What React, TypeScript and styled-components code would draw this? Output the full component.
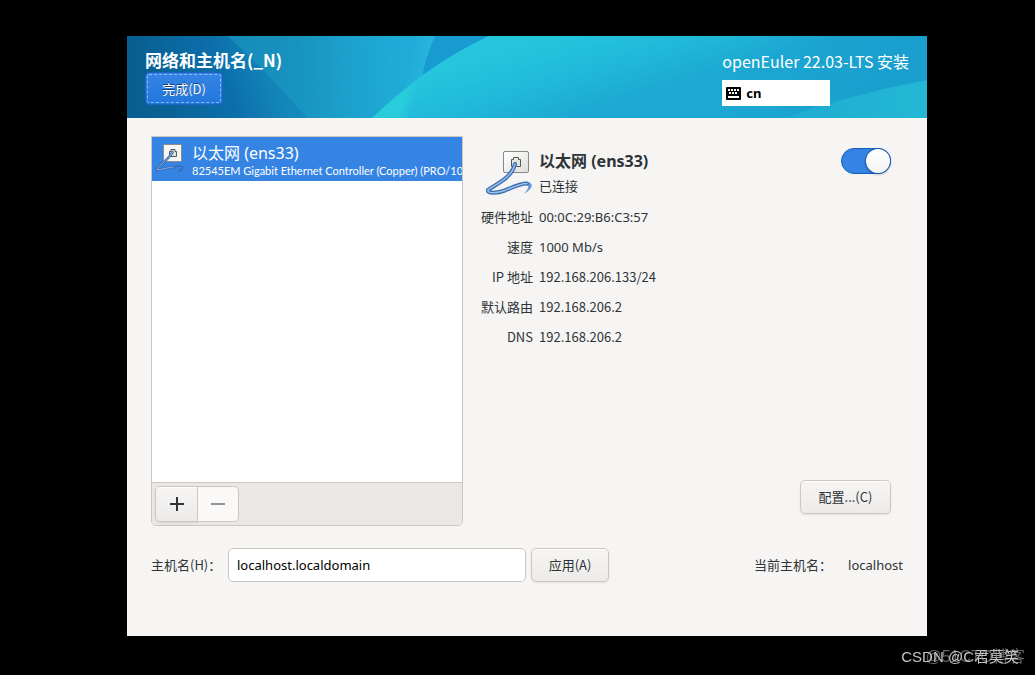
import React, { useState } from "react";
import styled, { createGlobalStyle, css } from "styled-components";

const latin = `"Noto Sans", "Noto Sans CJK SC", sans-serif`;
const cjk = `"Noto Sans CJK SC", sans-serif`;

const GlobalStyle = createGlobalStyle`
  * { box-sizing: border-box; }
  body {
    margin: 0;
    background: #000;
    color: #2e3436;
    font: 13px/20px ${cjk};
  }
  button, input { font: inherit; color: inherit; margin: 0; }
  h1, h2, p, dl, dd, dt, ul { margin: 0; padding: 0; }
`;

const Screen = styled.div`
  display: flex;
  min-height: 100vh;
  padding: 36px 108px 39px 127px;
`;

const Installer = styled.main`
  flex: 1;
  min-width: 0;
  background: #f6f5f4;
`;

const Header = styled.header`
  position: relative;
  display: flex;
  justify-content: space-between;
  height: 82px;
  padding: 12px 18px 0;
  overflow: hidden;
  background: #1fb0d8;
  color: #fff;
`;

const Backdrop = styled.svg`
  position: absolute;
  inset: 0;
  width: 100%;
  height: 100%;
`;

const HeaderSide = styled.div`
  position: relative;
  display: flex;
  flex-direction: column;
  align-items: flex-start;
`;

const Title = styled.h1`
  font-size: 17px;
  line-height: 24px;
  font-weight: 700;
`;

const DoneButton = styled.button`
  min-width: 78px;
  height: 33px;
  padding: 0 16px;
  border: 1px solid #1b63c4;
  border-radius: 4px;
  outline: 1px dashed rgba(255, 255, 255, 0.45);
  outline-offset: -3px;
  background: linear-gradient(#3584e4, #2277dd);
  color: #fff;
  text-shadow: 0 -1px rgba(0, 0, 0, 0.5);
`;

const Product = styled.p`
  font: 16px/26px ${cjk};
`;

const Layout = styled.button`
  display: flex;
  align-items: center;
  gap: 5px;
  width: 108px;
  height: 26px;
  margin-top: 6px;
  padding: 0 4px;
  border: 0;
  background: #fff;
  color: #000;
  font: 700 13px/20px ${latin};
`;

const Body = styled.div`
  padding: 18px 24px;
`;

const Panels = styled.div`
  display: grid;
  grid-template-columns: 312px 1fr;
  gap: 18px;
  height: 390px;
`;

const DevicePanel = styled.section`
  display: flex;
  flex-direction: column;
  min-width: 0;
  border: 1px solid #cdc7c2;
  border-radius: 0 0 5px 5px;
  background: #fff;
  overflow: hidden;
`;

const DeviceList = styled.ul`
  flex: 1;
  list-style: none;
`;

const Device = styled.li`
  display: flex;
  gap: 5px;
  height: 44px;
  padding: 3px 0 0 3px;
  background: #3584e4;
  color: #fff;
  white-space: nowrap;
  overflow: hidden;

  svg { flex: none; }
`;

const DeviceName = styled.p`
  font: 16px/26px ${latin};
`;

const DeviceModel = styled.p`
  font: 11px/10px Lato, ${cjk};
`;

const Toolbar = styled.div`
  display: flex;
  height: 43px;
  padding: 3px;
  border-top: 1px solid #cdc7c2;
  background: #ebe7e4;
`;

const raised = css`
  border: 1px solid #cdc7c2;
  background: linear-gradient(#f6f5f4, #edebe9);
  box-shadow: inset 0 1px #fff, 0 1px 2px rgba(0, 0, 0, 0.09);
`;

const ToolButton = styled.button<{ $side: "left" | "right" }>`
  display: grid;
  place-items: center;
  width: ${(p) => (p.$side === "left" ? 43 : 41)}px;
  height: 36px;
  padding: 0;
  ${raised}
  border-radius: ${(p) => (p.$side === "left" ? "5px 0 0 5px" : "0 5px 5px 0")};
  ${(p) => p.$side === "right" && css`border-left: 0;`}

  &:disabled {
    background: #faf9f8;
    color: #929595;
    box-shadow: none;
  }
`;

const PushButton = styled.button<{ $width: number }>`
  min-width: ${(p) => p.$width}px;
  height: 34px;
  padding: 0 16px;
  ${raised}
  border-radius: 5px;
`;

const DetailPanel = styled.section`
  display: flex;
  flex-direction: column;
  padding: 12px 12px 12px 0;
`;

const Connection = styled.div`
  display: flex;
  gap: 7px;
  height: 54px;
  padding-left: 3px;
`;

const ConnectionText = styled.div`
  flex: 1;
  line-height: 24px;
`;

const ConnectionName = styled.h2`
  font: 700 16px/26px ${latin};
`;

const Switch = styled.input`
  appearance: none;
  width: 50px;
  height: 26px;
  margin: 0;
  padding: 0;
  border: 1px solid #185fb4;
  border-radius: 13px;
  background: #deddda;

  &::before {
    content: "";
    display: block;
    width: 24px;
    height: 24px;
    border-radius: 50%;
    background: linear-gradient(#fff, #f4f3f2);
    box-shadow: 0 0 0 1px #185fb4, 0 1px 2px 1px rgba(0, 0, 0, 0.2);
  }
  &:checked { background: #3584e4; }
  &:checked::before { margin-left: 24px; }
`;

const Facts = styled.dl`
  flex: 1;
  display: grid;
  grid-template-columns: 52px 1fr;
  grid-auto-rows: 30px;
  align-items: center;
  column-gap: 6px;
`;

const FactLabel = styled.dt`
  text-align: right;
  white-space: nowrap;
`;

const FactValue = styled.dd<{ $latin?: boolean }>`
  font-family: ${(p) => (p.$latin ? latin : cjk)};
`;

const Configure = styled(PushButton)`
  align-self: flex-end;
`;

const HostRow = styled.form`
  display: flex;
  align-items: center;
  height: 34px;
  margin-top: 22px;
`;

const HostLabel = styled.label`
  width: 77px;
  white-space: nowrap;
`;

const HostInput = styled.input`
  width: 298px;
  height: 34px;
  margin-right: 5px;
  padding: 0 8px;
  border: 1px solid #cdc7c2;
  border-radius: 5px;
  background: #fff;
  color: #000;
  font-family: ${latin};
`;

const CurrentHost = styled.p`
  display: flex;
  gap: 16px;
  margin-left: auto;
  white-space: nowrap;
`;

const HostName = styled.span`
  font-family: ${latin};
`;

const Watermark = styled.div<{ $right: number; $size: number; $color: string }>`
  position: fixed;
  right: ${(p) => p.$right}px;
  bottom: 6px;
  color: ${(p) => p.$color};
  font: ${(p) => p.$size}px/24px "Liberation Sans", ${cjk};
  white-space: nowrap;
`;

function HeaderBackdrop() {
  return (
    <Backdrop viewBox="0 0 800 82" preserveAspectRatio="none" aria-hidden="true">
      <defs>
        <linearGradient id="base" x1="0" x2="780" y1="20" y2="-60" gradientUnits="userSpaceOnUse">
          <stop offset="0" stopColor="#085e91" />
          <stop offset="0.1" stopColor="#0b6799" />
          <stop offset="0.19" stopColor="#1483b0" />
          <stop offset="0.27" stopColor="#1b9fca" />
          <stop offset="0.34" stopColor="#1fabd8" />
          <stop offset="0.4" stopColor="#1fadd9" />
        </linearGradient>
        <linearGradient id="band" x1="40" x2="145" y1="80" y2="40" gradientUnits="userSpaceOnUse">
          <stop offset="0" stopColor="#0b6ba9" stopOpacity="0" />
          <stop offset="0.6" stopColor="#0b6fae" stopOpacity="0.85" />
          <stop offset="1" stopColor="#1288be" stopOpacity="0.65" />
        </linearGradient>
        <linearGradient id="glow" x1="140" x2="225" y1="50" y2="10" gradientUnits="userSpaceOnUse">
          <stop offset="0" stopColor="#1b9bc9" stopOpacity="0.6" />
          <stop offset="1" stopColor="#1fadd8" stopOpacity="0" />
        </linearGradient>
        <linearGradient id="arc" x1="420" x2="445" y1="0" y2="82" gradientUnits="userSpaceOnUse">
          <stop offset="0" stopColor="#26c5dd" />
          <stop offset="0.5" stopColor="#21b9db" />
          <stop offset="1" stopColor="#1ca8d2" />
        </linearGradient>
        <linearGradient id="right" x1="620" x2="770" y1="0" y2="60" gradientUnits="userSpaceOnUse">
          <stop offset="0" stopColor="#189ccd" stopOpacity="0" />
          <stop offset="1" stopColor="#189ccd" stopOpacity="0.8" />
        </linearGradient>
        <linearGradient id="corner" x1="0" x2="1" y1="0" y2="0">
          <stop offset="0" stopColor="#1fabd1" />
          <stop offset="1" stopColor="#23b8d5" />
        </linearGradient>
        <linearGradient id="ray" x1="255" x2="287" y1="60" y2="68" gradientUnits="userSpaceOnUse">
          <stop offset="0" stopColor="#2bd6da" stopOpacity="0.55" />
          <stop offset="0.6" stopColor="#2bd6da" stopOpacity="0.65" />
          <stop offset="1" stopColor="#2bd6da" stopOpacity="0" />
        </linearGradient>
        <linearGradient id="streak" x1="284" x2="304" y1="16" y2="20" gradientUnits="userSpaceOnUse">
          <stop offset="0" stopColor="#34bce0" stopOpacity="0" />
          <stop offset="1" stopColor="#34bce0" stopOpacity="0.5" />
        </linearGradient>
      </defs>
      <rect width="800" height="82" fill="url(#base)" />
      <path d="M20 0H100C128 24 158 56 180 82H20Z" fill="url(#band)" />
      <path d="M100 0C128 24 158 56 180 82H245L270 0Z" fill="url(#glow)" />
      <path d="M308 0Q298 22 295 42L362 0Z" fill="#179bd0" />
      <path d="M280 0H308Q298 22 295 42L262 66Z" fill="url(#streak)" />
      <path d="M245 82C278 50 316 21 362 0H800V82Z" fill="url(#arc)" />
      <path d="M245 82C262 66 278 53 297 40Q292 64 281 82Z" fill="url(#ray)" />
      <path d="M362 0H800V82H362Z" fill="url(#right)" />
      <path d="M658 82Q725 58 800 44V82Z" fill="url(#corner)" />
    </Backdrop>
  );
}

function KeyboardIcon() {
  return (
    <svg width="15" height="13" viewBox="0 0 15 13" aria-hidden="true">
      <rect width="15" height="13" rx="1" fill="#000" />
      <path
        d="M2 2h2v2H2zM5 2h2v2H5zM8 2h2v2H8zM11 2h2v2h-2zM3 5h2v2H3zM6 5h2v2H6zM9 5h2v2H9zM2 9h11v2H2z"
        fill="#fff"
      />
    </svg>
  );
}

function SmallWiredIcon() {
  const cable = "M17.5 12C15 18 7 23 2 29C2 31 10 28 18 27";
  const tail = "M18 27C29 24 30 28 24 31";
  return (
    <svg width="32" height="34" viewBox="0 0 32 34" fill="none" aria-hidden="true">
      <rect x="8.5" y="4.5" width="18" height="17" rx="1" fill="#f5f5f3" stroke="#8b8b87" />
      <path d="M14.500 16.500v-5h1.500v-2h4v2h1.500v5z" fill="#ddd" stroke="#555753" />
      <path d={tail} stroke="#3b6aa8" strokeWidth="1.500" strokeLinecap="round" />
      <path d={cable} stroke="#3b6aa8" strokeWidth="2.500" strokeLinecap="round" />
      <path d={cable} stroke="#8ab2e2" strokeWidth="1" strokeLinecap="round" />
    </svg>
  );
}

function WiredIcon() {
  const lead = "M31 16C28 30 12 36 4 42";
  const loop = "M4 42C3 46 14 45 21 42.500C30 38.500 36 35.500 43 35.500";
  const tail = "M42 34C51 34 49 41 40 46C44 41 46 38 42 37Z";
  return (
    <svg width="48" height="48" viewBox="0 0 48 48" fill="none" aria-hidden="true">
      <defs>
        <linearGradient id="plate" x1="0" x2="1" y1="0" y2="1">
          <stop offset="0" stopColor="#fff" />
          <stop offset="1" stopColor="#dededb" />
        </linearGradient>
      </defs>
      <rect x="19.500" y="3.500" width="25" height="21" rx="1.500" fill="url(#plate)" stroke="#888a85" />
      <path d="M27.500 18.500v-7h2v-2h5v2h2v7z" fill="#e6e6e4" stroke="#555753" />
      <path d={tail} fill="#6d9bd6" />
      <path d={loop} stroke="#3b6db0" strokeWidth="4" strokeLinecap="round" />
      <path d={lead} stroke="#3b6db0" strokeWidth="4" strokeLinecap="round" />
      <path d={loop} stroke="#9dc0ec" strokeWidth="1.500" strokeLinecap="round" />
      <path d={lead} stroke="#9dc0ec" strokeWidth="1.500" strokeLinecap="round" />
    </svg>
  );
}

const facts = [
  { label: "硬件地址", value: "00:0C:29:B6:C3:57", latin: true },
  { label: "速度", value: "1000 Mb/s", latin: true },
  { label: "IP 地址", value: "192.168.206.133/24" },
  { label: "默认路由", value: "192.168.206.2" },
  { label: "DNS", value: "192.168.206.2" },
];

export default function App() {
  const [enabled, setEnabled] = useState(true);
  const [host, setHost] = useState("localhost.localdomain");

  return (
    <>
      <GlobalStyle />
      <Screen>
        <Installer>
          <Header>
            <HeaderBackdrop />
            <HeaderSide>
              <Title>网络和主机名(_N)</Title>
              <DoneButton type="button">完成(D)</DoneButton>
            </HeaderSide>
            <HeaderSide>
              <Product>openEuler 22.03-LTS 安装</Product>
              <Layout type="button">
                <KeyboardIcon />
                cn
              </Layout>
            </HeaderSide>
          </Header>
          <Body>
            <Panels>
              <DevicePanel>
                <DeviceList>
                  <Device>
                    <SmallWiredIcon />
                    <div>
                      <DeviceName>以太网 (ens33)</DeviceName>
                      <DeviceModel>82545EM Gigabit Ethernet Controller (Copper) (PRO/1000 MT)</DeviceModel>
                    </div>
                  </Device>
                </DeviceList>
                <Toolbar>
                  <ToolButton type="button" $side="left" aria-label="添加">
                    <svg width="14" height="14" viewBox="0 0 14 14" aria-hidden="true">
                      <path d="M6 0h2v6h6v2H8v6H6V8H0V6h6z" fill="currentColor" />
                    </svg>
                  </ToolButton>
                  <ToolButton type="button" $side="right" aria-label="移除" disabled>
                    <svg width="14" height="14" viewBox="0 0 14 14" aria-hidden="true">
                      <path d="M0 6h14v2H0z" fill="currentColor" />
                    </svg>
                  </ToolButton>
                </Toolbar>
              </DevicePanel>
              <DetailPanel>
                <Connection>
                  <WiredIcon />
                  <ConnectionText>
                    <ConnectionName>以太网 (ens33)</ConnectionName>
                    <p>已连接</p>
                  </ConnectionText>
                  <Switch
                    type="checkbox"
                    role="switch"
                    aria-label="以太网 (ens33)"
                    checked={enabled}
                    onChange={(e) => setEnabled(e.target.checked)}
                  />
                </Connection>
                <Facts>
                  {facts.map((f) => (
                    <React.Fragment key={f.label}>
                      <FactLabel>{f.label}</FactLabel>
                      <FactValue $latin={f.latin}>{f.value}</FactValue>
                    </React.Fragment>
                  ))}
                </Facts>
                <Configure type="button" $width={91}>配置...(C)</Configure>
              </DetailPanel>
            </Panels>
            <HostRow onSubmit={(e) => e.preventDefault()}>
              <HostLabel htmlFor="host">主机名(H)：</HostLabel>
              <HostInput id="host" value={host} onChange={(e) => setHost(e.target.value)} />
              <PushButton type="submit" $width={78}>应用(A)</PushButton>
              <CurrentHost>
                <span>当前主机名：</span>
                <HostName>localhost</HostName>
              </CurrentHost>
            </HostRow>
          </Body>
        </Installer>
      </Screen>
      <Watermark $right={10} $size={16} $color="#626262">@51CTO博客</Watermark>
      <Watermark $right={16} $size={15} $color="#c4c4c4">CSDN @C君莫笑</Watermark>
    </>
  );
}
